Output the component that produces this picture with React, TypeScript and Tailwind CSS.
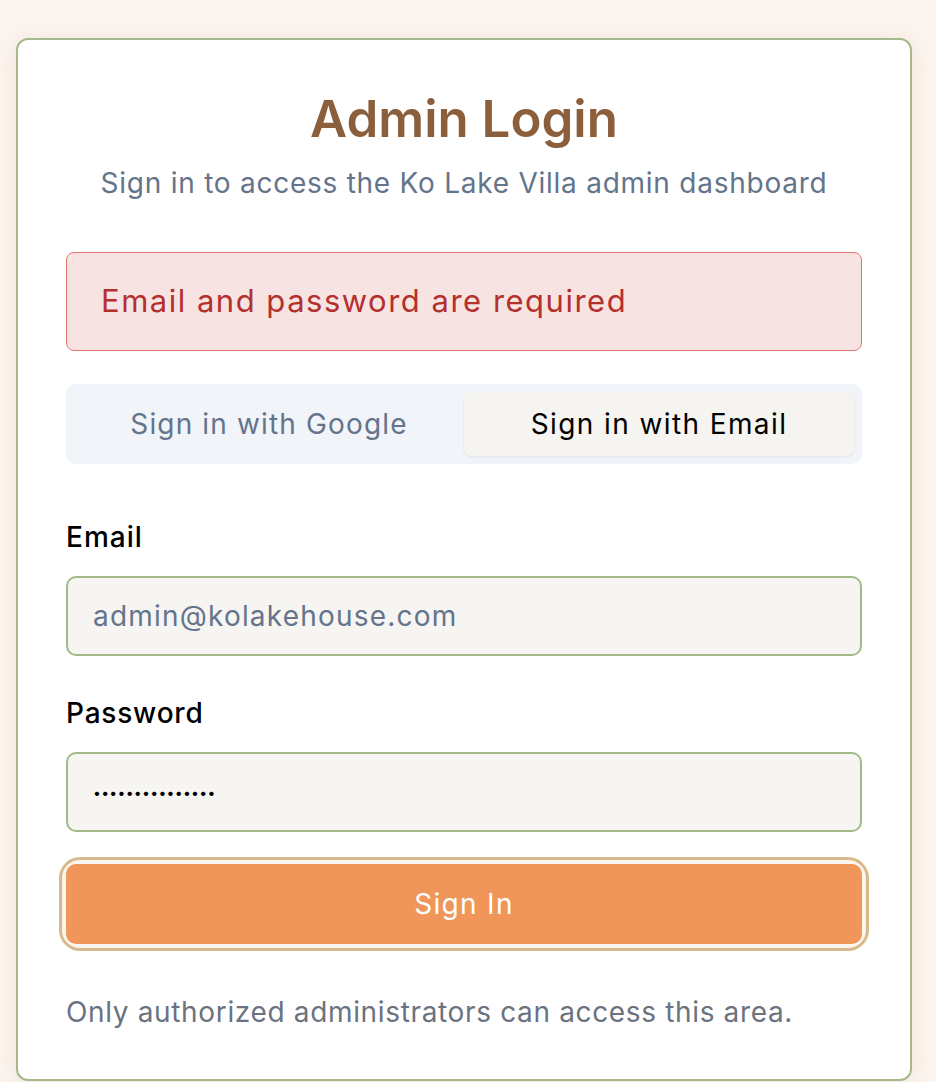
import React from "react";

export default function App() {
  const font = { fontFamily: "Inter, 'Noto Sans', sans-serif" };
  return (
    <div className="min-h-[1082px] bg-[#fcf4ee] pl-4 pr-6 pt-[38px]" style={font}>
      <div className="rounded-[12px] border-2 border-[#a5b98b] bg-white px-12 pt-12 pb-[47px] shadow-[0_4px_24px_rgba(120,90,60,0.10)]">
        <h1 className="text-center text-[51px] leading-[62px] font-semibold text-[#8b5e3c]">Admin Login</h1>
        <p className="mt-[13px] text-center text-[28px] leading-[40px] tracking-[0.75px] text-[#64748b]">
          Sign in to access the Ko Lake Villa admin dashboard
        </p>

        <div className="mt-[49px] flex h-[99px] items-center rounded-[8px] border-[1.5px] border-[#e27570] bg-[#f8e3e3] pl-[34px]">
          <span className="text-[31px] tracking-[1.5px] text-[#b3302d]">Email and password are required</span>
        </div>

        <div className="mt-[33px] grid h-[80px] grid-cols-2 rounded-[10px] bg-[#f1f4f9] p-2">
          <button className="flex items-center justify-center rounded-[8px] text-[28px] tracking-[1.15px] text-[#64748b]">
            Sign in with Google
          </button>
          <button className="flex items-center justify-center rounded-[8px] bg-[#f5f4f0] text-[28px] tracking-[1.4px] text-black shadow-[0_1px_3px_rgba(0,0,0,0.08)]">
            Sign in with Email
          </button>
        </div>

        <label className="mt-[53px] block text-[28px] leading-[40px] tracking-[1px] font-medium text-black">Email</label>
        <input
          type="email"
          placeholder="admin@kolakehouse.com"
          className="mt-[19px] block h-[80px] w-full rounded-[10px] border-2 border-[#a5b98b] bg-[#f6f5f1] px-[25px] text-[28px] tracking-[1.2px] text-black outline-none placeholder:text-[#64748b]"
        />

        <label className="mt-[37px] block text-[28px] leading-[40px] tracking-[0.8px] font-medium text-black">Password</label>
        <input
          type="password"
          readOnly
          value="adminpassword12"
          className="mt-[19px] block h-[80px] w-full rounded-[10px] border-2 border-[#a5b98b] bg-[#f6f5f1] px-[25px] text-[14px] tracking-[0.3px] text-black outline-none"
        />

        <div className="mt-[32px] rounded-[14px] ring-[3px] ring-[#d7b98b] ring-offset-4 ring-offset-[#faf6ef]">
          <button className="flex h-[80px] w-full items-center justify-center rounded-[10px] bg-[#f0965a] text-[28px] tracking-[1.3px] text-white">
            Sign In
          </button>
        </div>

        <p className="mt-[48px] text-[28px] leading-[40px] tracking-[0.65px] text-[#6b7280]">
          Only authorized administrators can access this area.
        </p>
      </div>
    </div>
  );
}
